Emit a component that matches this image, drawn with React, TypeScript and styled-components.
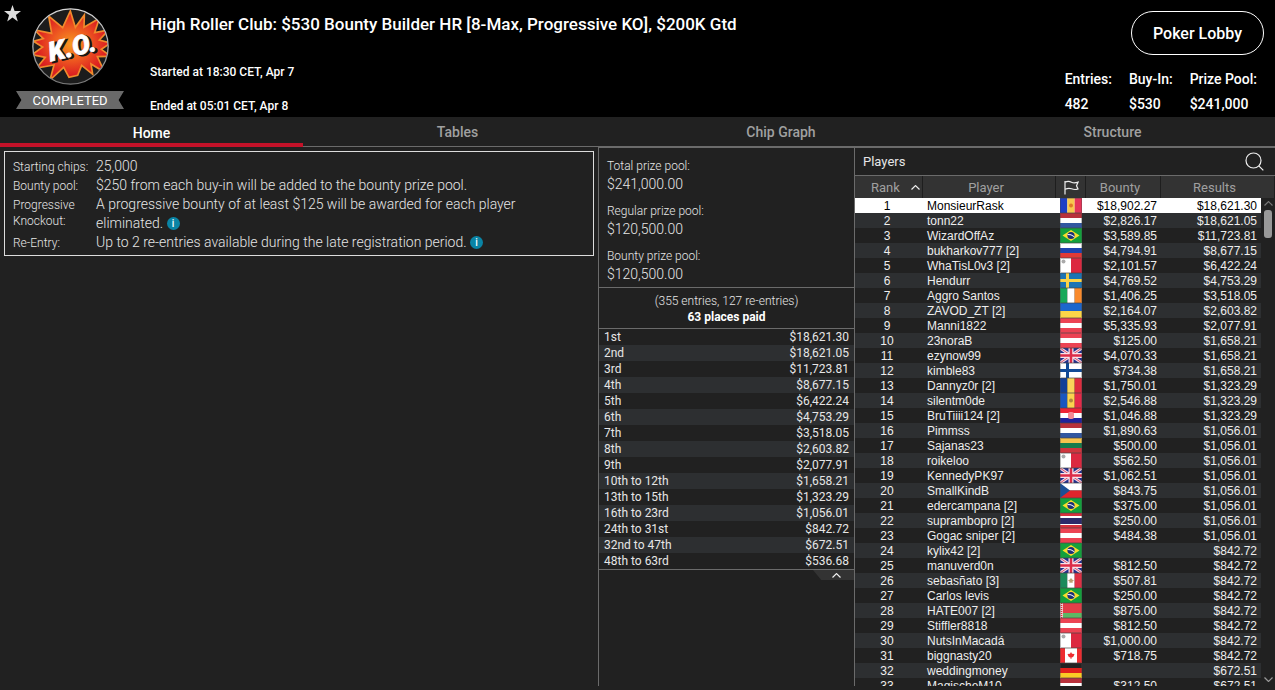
import React from "react";
import styled, { createGlobalStyle } from "styled-components";

const GlobalStyle = createGlobalStyle`
  *, *::before, *::after { box-sizing: border-box; }
  body {
    margin: 0;
    background: #212121;
    color: #e6e6e6;
    font-family: Roboto, "Liberation Sans", sans-serif;
  }
  button { font-family: inherit; cursor: pointer; }
`;

const line = "#6b6b6b";

const Page = styled.div`
  display: flex;
  flex-direction: column;
  height: 100vh;
  padding-bottom: 4px;
`;

/* ---------- Header ---------- */

const Header = styled.header`
  position: relative;
  display: flex;
  min-height: 117px;
  background: #000;
  color: #fff;
  font-weight: 500;
`;

const StarButton = styled.button`
  position: absolute;
  top: 5px;
  left: 4px;
  padding: 0;
  border: 0;
  background: none;
  line-height: 0;
`;

const Badge = styled.div`
  display: flex;
  flex-direction: column;
  align-items: center;
  gap: 6px;
  width: 150px;
  padding: 8px 26px 0 16px;
  flex: none;
`;

const Ribbon = styled.div`
  width: 108px;
  height: 18px;
  line-height: 19px;
  background: #696969;
  clip-path: polygon(0 0, 100% 0, 95% 50%, 100% 100%, 0 100%, 5% 50%);
  font-size: 13px;
  font-weight: 400;
  text-align: center;
`;

const Titles = styled.div`
  flex: 1;
  min-width: 0;
  padding-top: 14px;
`;

const Title = styled.h1`
  margin: 0 0 30px;
  font-size: 17px;
  line-height: 20px;
  font-weight: 500;
`;

const Times = styled.div`
  display: flex;
  flex-direction: column;
  gap: 18px;
  font-size: 12px;
  line-height: 16px;
`;

const Summary = styled.div`
  display: flex;
  flex-direction: column;
  align-items: flex-end;
  gap: 12px;
  padding: 11px 11px 0 0;
`;

const LobbyButton = styled.button`
  width: 133px;
  height: 44px;
  border: 1px solid #fff;
  border-radius: 22px;
  background: transparent;
  color: #fff;
  font-size: 16px;
  font-weight: 500;
`;

const Stats = styled.dl`
  display: flex;
  gap: 17px;
  margin: 0;
  padding-right: 7px;
  font-size: 14px;
  line-height: 25px;
`;

const Stat = styled.div`
  dt, dd { margin: 0; }
`;

/* ---------- Tabs ---------- */

const Tabs = styled.nav`
  display: grid;
  grid-template-columns: 303fr 309fr 338fr 325fr;
  height: 30px;
  flex: none;
  border-bottom: 1px solid ${line};
`;

const Tab = styled.button<{ $active?: boolean }>`
  height: 30px;
  padding: ${(p) => (p.$active ? "5px 0 0" : "0")};
  border: 0;
  border-bottom: ${(p) => (p.$active ? "4px solid #c41229" : "0")};
  background: none;
  color: ${(p) => (p.$active ? "#fff" : "#a0a0a0")};
  font-size: 14px;
  font-weight: 500;
`;

/* ---------- Body ---------- */

const Columns = styled.main`
  display: grid;
  grid-template-columns: minmax(0, 1fr) 256px 421px;
  flex: 1;
  min-height: 0;
`;

const Column = styled.section`
  min-width: 0;
  min-height: 0;
  border-top: 1px solid ${line};
  border-left: 1px solid ${line};
`;

const InfoColumn = styled.section`
  padding: 4px;
`;

const InfoBox = styled.dl`
  display: grid;
  grid-template-columns: 75px 1fr;
  column-gap: 8px;
  margin: 0;
  padding: 5px 8px 3px;
  border: 1px solid #dcdcdc;
  font-weight: 300;
`;

const Label = styled.dt<{ $wrap?: boolean }>`
  padding-top: 2px;
  font-size: 12px;
  line-height: 16px;
  white-space: ${(p) => (p.$wrap ? "normal" : "nowrap")};
`;

const Value = styled.dd`
  margin: 0;
  font-size: 14px;
  line-height: 19px;
`;

const InfoDot = styled.button`
  width: 13px;
  height: 13px;
  padding: 0;
  border: 0;
  border-radius: 50%;
  background: #0a84a5;
  color: #fff;
  font-size: 10px;
  font-weight: 500;
  line-height: 13px;
  text-align: center;
  vertical-align: 1px;
`;

const Pools = styled.dl`
  display: grid;
  gap: 10px;
  margin: 0;
  padding: 10px 8px 4px;
  border-bottom: 1px solid ${line};
  font-weight: 300;
`;

const Pool = styled.div`
  dt { font-size: 12px; line-height: 17px; }
  dd { margin: 0; font-size: 14px; line-height: 18px; }
`;

const EntriesNote = styled.div`
  padding: 5px 4px 3px;
  border-bottom: 1px solid ${line};
  font-size: 12px;
  line-height: 16px;
  font-weight: 300;
  text-align: center;

  strong { display: block; color: #fff; font-weight: 700; }
`;

const Payouts = styled.table`
  width: 100%;
  border-spacing: 0;
  border-bottom: 1px solid ${line};
  font-size: 12px;
  line-height: 15px;

  th, td { padding: 1px 5px 0; font-weight: 400; text-align: left; }
  td { text-align: right; }
  tr:nth-child(even) { background: #2d2f31; }
`;

const CollapseButton = styled.button`
  display: block;
  width: 41px;
  height: 10px;
  margin-left: auto;
  padding: 0 0 0 5px;
  border: 0;
  background: #333;
  clip-path: polygon(0 0, 100% 0, 100% 100%, 20% 100%);
  line-height: 0;
`;

/* ---------- Players ---------- */

const PlayersColumn = styled(Column)`
  display: flex;
  flex-direction: column;
`;

const PlayersBar = styled.div`
  display: flex;
  align-items: center;
  justify-content: space-between;
  height: 28px;
  flex: none;
  padding: 0 11px 0 8px;
  border-bottom: 1px solid ${line};

  h2 { margin: 0; font-size: 13px; font-weight: 400; }
`;

const IconButton = styled.button`
  padding: 0;
  border: 0;
  background: none;
  line-height: 0;
`;

const List = styled.div`
  display: grid;
  grid-template-rows: minmax(0, 1fr);
  flex: 1;
  min-height: 0;
  overflow: hidden;
`;

const PlayersTable = styled.table`
  grid-area: 1 / 1;
  align-self: start;
  width: 100%;
  table-layout: fixed;
  border-spacing: 0;
  font-family: "Liberation Sans", sans-serif;
  font-size: 12px;
  line-height: 14px;
`;

const HeadCell = styled.th`
  height: 22px;
  padding: 0 6px 0 0;
  border-right: 1px solid #1e1e1e;
  background: #333;
  color: #a0a0a0;
  font-family: Roboto, sans-serif;
  font-size: 13px;
  font-weight: 400;
  line-height: 21px;
  text-align: center;

  svg { display: block; margin-left: 8px; }
`;

const SortLabel = styled.span`
  display: flex;
  align-items: center;
  justify-content: space-between;
  padding: 0 0 0 16px;
  margin-right: -4px;
`;

const Row = styled.tr<{ $selected?: boolean; $even?: boolean }>`
  color: ${(p) => (p.$selected ? "#000" : "#eee")};

  td { background: ${(p) => (p.$selected ? "#fff" : p.$even ? "#2d2f31" : "#212121")}; }
  td:last-child { background: #212121; }
`;

const Cell = styled.td<{ $align?: string }>`
  height: 15px;
  padding: 1px 4px 0;
  text-align: ${(p) => p.$align || "left"};
  white-space: nowrap;
`;

const RankCell = styled(Cell)`
  padding-right: 8px;
  text-align: center;
`;

const FlagCell = styled(Cell)`
  padding-top: 0;

  svg { display: block; }
`;

const Scrollbar = styled.div`
  grid-area: 1 / 1;
  justify-self: end;
  display: flex;
  flex-direction: column;
  align-items: center;
  width: 14px;
  margin-top: 22px;
  padding: 3px 0 4px;
  z-index: 1;
`;

const Thumb = styled.div`
  width: 8px;
  height: 28px;
  margin: 4px 0 auto;
  border-radius: 3px;
  background: #999;
`;

/* ---------- Drawings ---------- */

const Chevron = ({ w = 9, h = 5, down = false, color = "#eee" }) => (
  <svg width={w} height={h} viewBox="0 0 9 5" fill="none" stroke={color} strokeWidth="1.2" aria-hidden="true">
    <path d={down ? "M.5 .5 4.5 4.5 8.5 .5" : "M.5 4.5 4.5 .6 8.5 4.5"} />
  </svg>
);

const KoLogo = () => (
  <svg width="77" height="77" viewBox="0 0 231 231" role="img" aria-label="Knockout">
    <defs>
      <radialGradient id="burst" cx="50%" cy="48%" r="52%">
        <stop offset="0" stopColor="#f79a20" />
        <stop offset=".45" stopColor="#ee5a20" />
        <stop offset=".85" stopColor="#dd2121" />
        <stop offset="1" stopColor="#cf1b20" />
      </radialGradient>
      <clipPath id="disc"><circle cx="115.500" cy="115.500" r="112" /></clipPath>
      <linearGradient id="rim" x1="0" y1="0" x2="0" y2="1">
        <stop offset="0" stopColor="#d8d8d8" />
        <stop offset="1" stopColor="#777" />
      </linearGradient>
    </defs>
    <circle cx="115.500" cy="115.500" r="113" fill="#1c1c1c" />
    <path
      clipPath="url(#disc)"
      d="M115 9 130 58 157 21 156 58 202 31 188 74 230 66 202 96 236 105 208 124 236 145 196 146 218 193 177 168 182 199 149 172 137 202 111 208 95 178 54 216 66 171 14 180 40 148 0 140 32 117 4 100 34 92 8 66 59 76 50 24 92 59Z"
      fill="url(#burst)" stroke="#f08a2c" strokeWidth="5" strokeLinejoin="miter"
    />
    <circle cx="115.500" cy="115.500" r="113" fill="none" stroke="url(#rim)" strokeWidth="4" />
    <g transform="rotate(-13 120 120)" fontFamily="Roboto, sans-serif" fontStyle="italic" fontWeight="900" fontSize="80">
      <text x="53" y="149" fill="#151515" stroke="#151515" strokeWidth="5">K.O.</text>
      <text x="48" y="145" fill="#fff" stroke="#fff" strokeWidth="2">K.O.</text>
    </g>
  </svg>
);

const V = ({ c }: { c: string[] }) => (
  <>{c.map((f, i) => <rect key={i} x={i * 7.34} width="7.34" height="15" fill={f} />)}</>
);
const H = ({ c }: { c: string[] }) => (
  <>{c.map((f, i) => <rect key={i} y={i * 5} width="22" height="5" fill={f} />)}</>
);

const flags: Record<string, React.ReactNode> = {
  ad: <><V c={["#1f3fc4", "#f9c94e", "#e5355a"]} /><circle cx="11" cy="7.500" r="2" fill="#e07b28" /></>,
  md: <><V c={["#1a56c0", "#fbd34f", "#e52a49"]} /><circle cx="11" cy="7.500" r="2" fill="#b08a3c" /></>,
  ro: <V c={["#123f97", "#fad55a", "#de2c3e"]} />,
  nl: <H c={["#b8313c", "#fff", "#3157a0"]} />,
  ru: <H c={["#fff", "#1f44ae", "#e03a36"]} />,
  lt: <H c={["#f6c34e", "#167c4c", "#cf363e"]} />,
  at: <H c={["#ec4353", "#fff", "#ec4353"]} />,
  de: <H c={["#222", "#e0201c", "#fbcb26"]} />,
  hr: <><H c={["#ee2436", "#fff", "#20229c"]} /><rect x="8" y="4" width="6" height="7" rx="2" fill="#f48a95" /></>,
  ie: <V c={["#17a85a", "#fff", "#f98a2c"]} />,
  mx: <><V c={["#1c8a5a", "#fff", "#de3145"]} /><path d="M8 7.500 9.500 6.800 11 5 12.500 6.800 14 7.500 12.500 8.500V10H11.600L11 9 10.400 10H9.500V8.500Z" fill="#b9a070" /></>,
  ua: <><rect width="22" height="8" fill="#1c66cc" /><rect y="8" width="22" height="7" fill="#fdd648" /></>,
  br: <><rect width="22" height="15" fill="#13a03c" /><path d="M2.500 7.500 11 2 19.500 7.500 11 13Z" fill="#f8dc2c" /><circle cx="11" cy="7.500" r="3.600" fill="#1c2f78" /><path d="M7.600 6.500Q11 6 14.400 8.800" stroke="#fff" fill="none" /></>,
  mt: <><rect width="11" height="15" fill="#fff" /><rect x="11" width="11" height="15" fill="#dc2840" /><circle cx="3.500" cy="3.500" r="2" fill="#aaa" /></>,
  se: <><rect width="22" height="15" fill="#1c74b4" /><path d="M7.500 0V15M0 7.500H22" stroke="#fbd348" strokeWidth="3" /></>,
  fi: <><rect width="22" height="15" fill="#fff" /><path d="M7.500 0V15M0 7.500H22" stroke="#124a96" strokeWidth="3" /></>,
  gb: <><rect width="22" height="15" fill="#23308e" /><path d="M0 0 22 15M22 0 0 15" stroke="#f4dce6" strokeWidth="3" /><path d="M0 0 22 15M22 0 0 15" stroke="#d8506c" /><path d="M11 0V15M0 7.500H22" stroke="#f8e4ea" strokeWidth="5" /><path d="M11 0V15M0 7.500H22" stroke="#dc2c48" strokeWidth="2.500" /></>,
  cz: <><rect width="22" height="7.500" fill="#fff" /><rect y="7.500" width="22" height="7.500" fill="#e0242c" /><path d="M0 0 10 7.500 0 15Z" fill="#1c4f94" /></>,
  th: <><rect width="22" height="15" fill="#d8303c" /><rect y="3" width="22" height="9" fill="#fff" /><rect y="5" width="22" height="6" fill="#2c2a6a" /></>,
  by: <><rect width="22" height="10" fill="#e23e48" /><rect y="10" width="22" height="5" fill="#5cb864" /><rect width="3" height="15" fill="#f0d0d0" /><path d="M1.500 0V15" stroke="#d8303c" strokeDasharray="1 1" strokeWidth="1.500" /></>,
  ca: <><rect width="22" height="15" fill="#fff" /><path d="M0 0H5V15H0ZM17 0H22V15H17Z" fill="#ee2c30" /><path d="M11 4 12 5.800 14.500 6 13.500 8.500 12 9.500H11.400V11H10.600V9.500H10L8.500 8.500 7.500 6 10 5.800Z" fill="#ee2c30" /></>,
};

const Flag = ({ code }: { code: string }) => (
  <svg width="22" height="15" viewBox="0 0 22 15" role="img" aria-label={code.toUpperCase()}>
    {flags[code]}
    <rect x=".5" y=".5" width="21" height="14" fill="none" stroke="#444" strokeOpacity=".35" />
  </svg>
);

/* ---------- Data ---------- */

const payouts = [
  ["1st", "$18,621.30"], ["2nd", "$18,621.05"], ["3rd", "$11,723.81"], ["4th", "$8,677.15"],
  ["5th", "$6,422.24"], ["6th", "$4,753.29"], ["7th", "$3,518.05"], ["8th", "$2,603.82"],
  ["9th", "$2,077.91"], ["10th to 12th", "$1,658.21"], ["13th to 15th", "$1,323.29"],
  ["16th to 23rd", "$1,056.01"], ["24th to 31st", "$842.72"], ["32nd to 47th", "$672.51"],
  ["48th to 63rd", "$536.68"],
];

const players = [
  ["MonsieurRask", "ad", "$18,902.27", "$18,621.30"],
  ["tonn22", "nl", "$2,826.17", "$18,621.05"],
  ["WizardOffAz", "br", "$3,589.85", "$11,723.81"],
  ["bukharkov777 [2]", "ru", "$4,794.91", "$8,677.15"],
  ["WhaTisL0v3 [2]", "mt", "$2,101.57", "$6,422.24"],
  ["Hendurr", "se", "$4,769.52", "$4,753.29"],
  ["Aggro Santos", "ie", "$1,406.25", "$3,518.05"],
  ["ZAVOD_ZT [2]", "ua", "$2,164.07", "$2,603.82"],
  ["Manni1822", "at", "$5,335.93", "$2,077.91"],
  ["23noraB", "at", "$125.00", "$1,658.21"],
  ["ezynow99", "gb", "$4,070.33", "$1,658.21"],
  ["kimble83", "fi", "$734.38", "$1,658.21"],
  ["Dannyz0r [2]", "ro", "$1,750.01", "$1,323.29"],
  ["silentm0de", "md", "$2,546.88", "$1,323.29"],
  ["BruTiiii124 [2]", "hr", "$1,046.88", "$1,323.29"],
  ["Pimmss", "nl", "$1,890.63", "$1,056.01"],
  ["Sajanas23", "lt", "$500.00", "$1,056.01"],
  ["roikeloo", "mt", "$562.50", "$1,056.01"],
  ["KennedyPK97", "gb", "$1,062.51", "$1,056.01"],
  ["SmallKindB", "cz", "$843.75", "$1,056.01"],
  ["edercampana [2]", "br", "$375.00", "$1,056.01"],
  ["suprambopro [2]", "th", "$250.00", "$1,056.01"],
  ["Gogac sniper [2]", "at", "$484.38", "$1,056.01"],
  ["kylix42 [2]", "br", "", "$842.72"],
  ["manuverd0n", "gb", "$812.50", "$842.72"],
  ["sebasñato [3]", "mx", "$507.81", "$842.72"],
  ["Carlos levis", "br", "$250.00", "$842.72"],
  ["HATE007 [2]", "by", "$875.00", "$842.72"],
  ["Stiffler8818", "at", "$812.50", "$842.72"],
  ["NutsInMacadá", "mt", "$1,000.00", "$842.72"],
  ["biggnasty20", "ca", "$718.75", "$842.72"],
  ["weddingmoney", "de", "", "$672.51"],
  ["MagischeM10", "nl", "$312.50", "$672.51"],
];

export default function App() {
  return (
    <Page>
      <GlobalStyle />
      <Header>
        <StarButton aria-label="Favourite">
          <svg width="17" height="17" viewBox="0 0 17 17" aria-hidden="true">
            <path d="M8.500 0 10.600 6H17L11.900 9.900 13.800 16.400 8.500 12.600 3.200 16.400 5.100 9.900 0 6H6.400Z" fill="#dcdcdc" />
          </svg>
        </StarButton>
        <Badge>
          <KoLogo />
          <Ribbon>COMPLETED</Ribbon>
        </Badge>
        <Titles>
          <Title>High Roller Club: $530 Bounty Builder HR [8-Max, Progressive KO], $200K Gtd</Title>
          <Times>
            <span>Started at 18:30 CET, Apr 7</span>
            <span>Ended at 05:01 CET, Apr 8</span>
          </Times>
        </Titles>
        <Summary>
          <LobbyButton>Poker Lobby</LobbyButton>
          <Stats>
            <Stat><dt>Entries:</dt><dd>482</dd></Stat>
            <Stat><dt>Buy-In:</dt><dd>$530</dd></Stat>
            <Stat><dt>Prize Pool:</dt><dd>$241,000</dd></Stat>
          </Stats>
        </Summary>
      </Header>

      <Tabs>
        <Tab $active>Home</Tab>
        <Tab>Tables</Tab>
        <Tab>Chip Graph</Tab>
        <Tab>Structure</Tab>
      </Tabs>

      <Columns>
        <InfoColumn>
          <InfoBox>
            <Label>Starting chips:</Label>
            <Value>25,000</Value>
            <Label>Bounty pool:</Label>
            <Value>$250 from each buy-in will be added to the bounty prize pool.</Value>
            <Label $wrap>Progressive Knockout:</Label>
            <Value>
              A progressive bounty of at least $125 will be awarded for each player eliminated.{" "}
              <InfoDot aria-label="About progressive knockout">i</InfoDot>
            </Value>
            <Label>Re-Entry:</Label>
            <Value>
              Up to 2 re-entries available during the late registration period.{" "}
              <InfoDot aria-label="About re-entry">i</InfoDot>
            </Value>
          </InfoBox>
        </InfoColumn>

        <Column>
          <Pools>
            <Pool><dt>Total prize pool:</dt><dd>$241,000.00</dd></Pool>
            <Pool><dt>Regular prize pool:</dt><dd>$120,500.00</dd></Pool>
            <Pool><dt>Bounty prize pool:</dt><dd>$120,500.00</dd></Pool>
          </Pools>
          <EntriesNote>
            (355 entries, 127 re-entries)
            <strong>63 places paid</strong>
          </EntriesNote>
          <Payouts>
            <tbody>
              {payouts.map(([place, prize]) => (
                <tr key={place}><th scope="row">{place}</th><td>{prize}</td></tr>
              ))}
            </tbody>
          </Payouts>
          <CollapseButton aria-label="Collapse payouts"><Chevron /></CollapseButton>
        </Column>

        <PlayersColumn>
          <PlayersBar>
            <h2>Players</h2>
            <IconButton aria-label="Search players">
              <svg width="19" height="19" viewBox="0 0 19 19" fill="none" stroke="#eee" strokeWidth="1.200" aria-hidden="true">
                <circle cx="8.500" cy="8.500" r="7.500" />
                <path d="M13.800 13.800 18.300 18.300" />
              </svg>
            </IconButton>
          </PlayersBar>
          <List>
            <PlayersTable>
              <colgroup>
                <col style={{ width: 68 }} />
                <col style={{ width: 133 }} />
                <col style={{ width: 30 }} />
                <col style={{ width: 75 }} />
                <col />
                <col style={{ width: 14 }} />
              </colgroup>
              <thead>
                <tr>
                  <HeadCell><SortLabel>Rank <Chevron /></SortLabel></HeadCell>
                  <HeadCell>Player</HeadCell>
                  <HeadCell>
                    <svg width="15" height="15" viewBox="0 0 15 15" fill="none" stroke="#eee" strokeWidth="1.200" aria-label="Country" role="img">
                      <path d="M1 1V14.500M1 2.200C4 .8 5 1 7.500 2.200S11 3 14 2.200L12.500 5.700 14 9C11 10 10 9.800 7.500 8.800S4 8 1 9.200" />
                    </svg>
                  </HeadCell>
                  <HeadCell>Bounty</HeadCell>
                  <HeadCell colSpan={2}>Results</HeadCell>
                </tr>
              </thead>
              <tbody>
                {players.map(([name, code, bounty, result], i) => (
                  <Row key={name} $selected={i === 0} $even={i % 2 === 1}>
                    <RankCell>{i + 1}</RankCell>
                    <Cell>{name}</Cell>
                    <FlagCell><Flag code={code} /></FlagCell>
                    <Cell $align="right">{bounty}</Cell>
                    <Cell $align="right">{result}</Cell>
                    <td />
                  </Row>
                ))}
              </tbody>
            </PlayersTable>
            <Scrollbar>
              <Chevron color="#777" />
              <Thumb />
              <Chevron color="#999" down />
            </Scrollbar>
          </List>
        </PlayersColumn>
      </Columns>
    </Page>
  );
}
